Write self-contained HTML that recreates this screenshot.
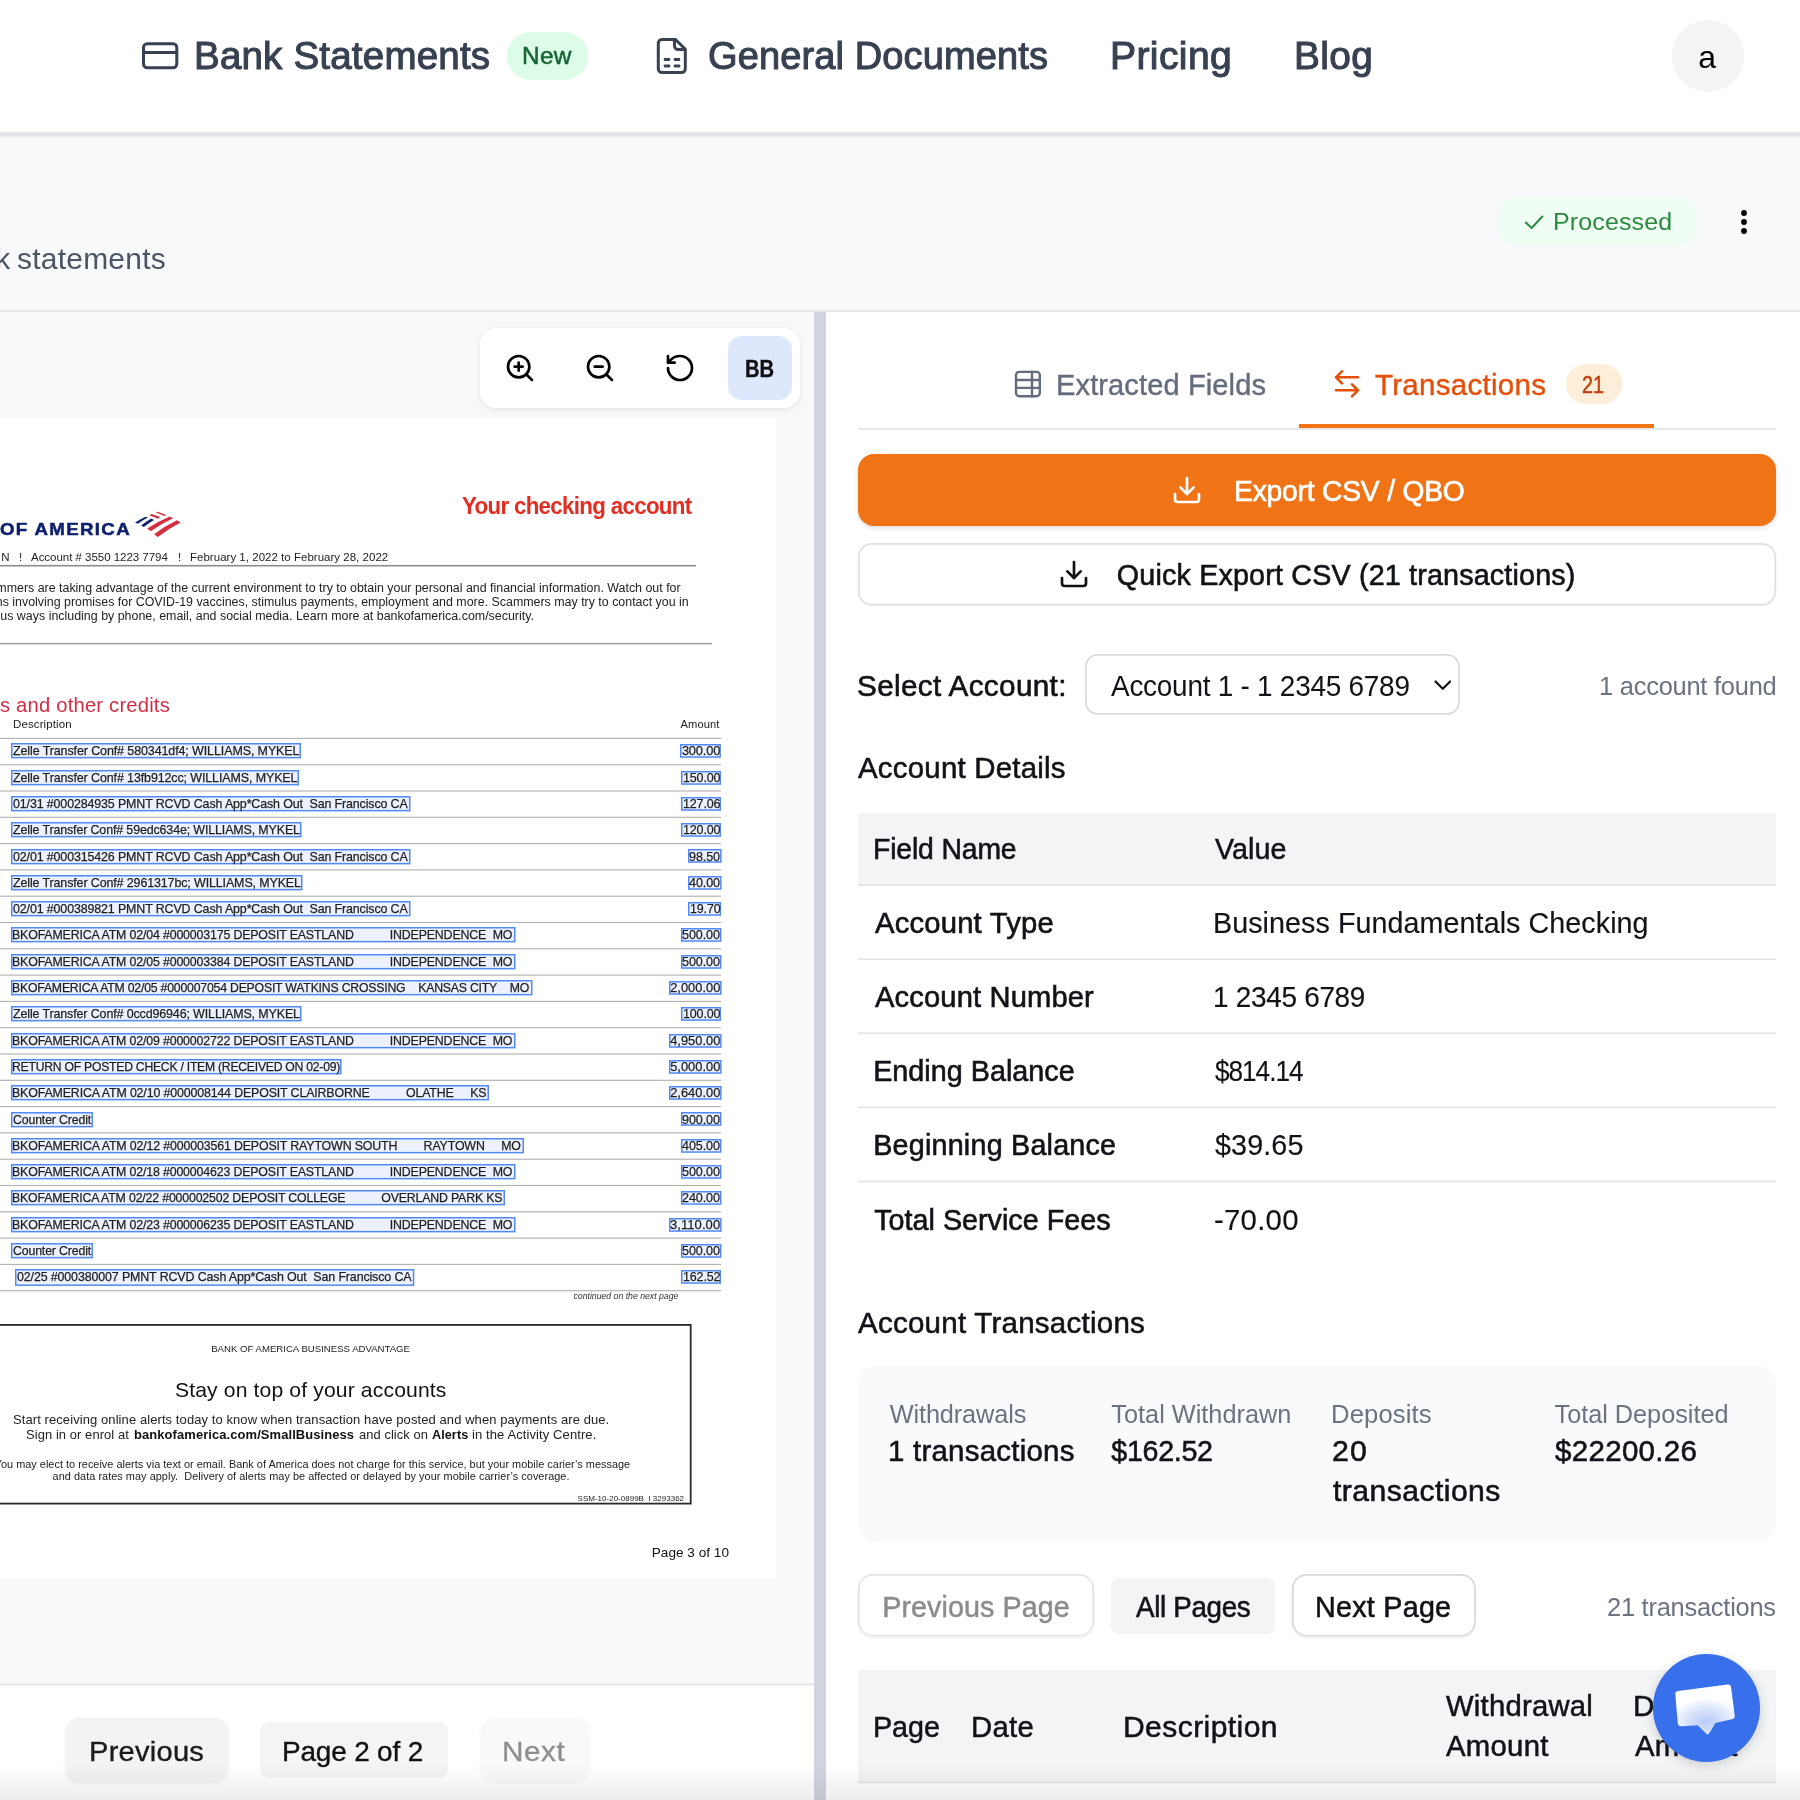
<!DOCTYPE html>
<html><head><meta charset="utf-8"><title>Bank Statement</title>
<style>
html,body{margin:0;padding:0;}
body{width:1800px;height:1800px;overflow:hidden;position:relative;background:#f8f9fb;font-family:"Liberation Sans",sans-serif;}
#app{position:absolute;left:0;top:0;width:1800px;height:1800px;overflow:hidden;will-change:transform;}
.b{position:absolute;}
.t{position:absolute;white-space:pre;line-height:1;font-family:"Liberation Sans",sans-serif;}
svg{position:absolute;overflow:visible;}
</style></head><body>
<div id="app">
<div class="b" style="left:-20px;top:0px;width:1840px;height:133.5px;background:#e3e5ea;box-shadow:0 2px 4px rgba(0,0,0,0.13);"></div>
<div class="b" style="left:0px;top:0px;width:1800px;height:132px;background:#fff;"></div>
<svg style="left:0;top:0" width="1800" height="140"><g fill="none" stroke="#374151" stroke-width="3" stroke-linecap="round" stroke-linejoin="round"><rect x="143.5" y="43.800" width="33.300" height="24" rx="3.800"/><path d="M143.500 52.600h33.300"/><path d="M675.5 39.5H662a3.7 3.7 0 0 0-3.7 3.7v25.6a3.7 3.7 0 0 0 3.7 3.7h19.6a3.7 3.7 0 0 0 3.7-3.7V49.3Z"/><path d="M674.5 39.8v6a3.7 3.7 0 0 0 3.7 3.7h6.6"/><path d="M665 59.5h4M675 59.5h4M665 66h4M675 66h4" stroke-width="2.8"/></g></svg>
<span class="t" style="left:194.26px;top:37.13px;font-size:38px;color:#374151;letter-spacing:0.187px;-webkit-text-stroke:1.05px #374151;transform:scaleX(1.0139);transform-origin:0 0;">Bank Statements</span>
<div class="b" style="left:507px;top:32px;width:81px;height:48px;background:#dcfce7;border-radius:24px;"></div>
<span class="t" style="left:521.98px;top:44.38px;font-size:24px;color:#166534;letter-spacing:0.260px;-webkit-text-stroke:0.5px #166534;transform:scaleX(1.0166);transform-origin:0 0;">New</span>
<span class="t" style="left:708.00px;top:37.13px;font-size:38px;color:#374151;letter-spacing:0.129px;-webkit-text-stroke:1.05px #374151;">General Documents</span>
<span class="t" style="left:1110.21px;top:37.13px;font-size:38px;color:#374151;letter-spacing:0.355px;-webkit-text-stroke:1.05px #374151;transform:scaleX(1.0296);transform-origin:0 0;">Pricing</span>
<span class="t" style="left:1293.63px;top:37.13px;font-size:38px;color:#374151;letter-spacing:0.337px;-webkit-text-stroke:1.05px #374151;transform:scaleX(1.0218);transform-origin:0 0;">Blog</span>
<div class="b" style="left:1672px;top:20px;width:72px;height:72px;background:#f4f4f5;border-radius:36px;"></div>
<span class="t" style="left:1698.20px;top:40.91px;font-size:32px;color:#000;">a</span>
<span class="t" style="left:-4.40px;top:244.21px;font-size:29.4px;color:#4b5563;">k</span>
<span class="t" style="left:17.00px;top:244.21px;font-size:29.4px;color:#4b5563;letter-spacing:0.216px;transform:scaleX(1.0207);transform-origin:0 0;">statements</span>
<div class="b" style="left:1498px;top:197px;width:198px;height:49px;background:#f0fdf4;border-radius:18px;"></div>
<svg style="left:0;top:0" width="1800" height="320"><path d="M1525.800 222.600l5.800 5.400 10.800-11.500" fill="none" stroke="#2a8a3e" stroke-width="2" stroke-linecap="round" stroke-linejoin="round"/><circle cx="1744" cy="213" r="2.900"/><circle cx="1744" cy="222" r="2.900"/><circle cx="1744" cy="231" r="2.900"/></svg>
<span class="t" style="left:1552.97px;top:210.38px;font-size:24.6px;color:#2a8a3e;letter-spacing:0.142px;transform:scaleX(1.0152);transform-origin:0 0;">Processed</span>
<div class="b" style="left:0px;top:310px;width:1800px;height:2px;background:#e5e7eb;"></div>
<div class="b" style="left:0px;top:312px;width:814px;height:1488px;background:#f8f9fb;"></div>
<div class="b" style="left:814px;top:312px;width:12px;height:1488px;background:#d1d4de;"></div>
<div class="b" style="left:826px;top:312px;width:974px;height:1488px;background:#fff;"></div>
<div class="b" style="left:0px;top:418px;width:776px;height:1160px;background:#fff;"></div>
<div class="b" style="left:480px;top:328px;width:320px;height:80px;background:#fff;border-radius:16px;box-shadow:0 2px 6px rgba(0,0,0,0.08),0 0 2px rgba(0,0,0,0.04);"></div>
<div class="b" style="left:728px;top:336px;width:64px;height:64px;background:#dde8fc;border-radius:14px;"></div>
<span class="t" style="left:745.16px;top:356.98px;font-size:24px;color:#111;font-weight:700;-webkit-text-stroke:0.4px #111;transform:scaleX(0.84);transform-origin:0 0;">BB</span>
<svg style="left:504.00px;top:352.00px" width="32" height="32" viewBox="0 0 24 24" fill="none" stroke="#000" stroke-width="2" stroke-linecap="round" stroke-linejoin="round"><circle cx="11" cy="11" r="8"/><path d="M21 21l-4.35-4.35M11 8v6M8 11h6"/></svg>
<svg style="left:584.00px;top:352.00px" width="32" height="32" viewBox="0 0 24 24" fill="none" stroke="#000" stroke-width="2" stroke-linecap="round" stroke-linejoin="round"><circle cx="11" cy="11" r="8"/><path d="M21 21l-4.35-4.35M8 11h6"/></svg>
<svg style="left:664.00px;top:352.00px" width="32" height="32" viewBox="0 0 24 24" fill="none" stroke="#000" stroke-width="2" stroke-linecap="round" stroke-linejoin="round"><path d="M3 12a9 9 0 1 0 9-9 9.75 9.75 0 0 0-6.74 2.74L3 8"/><path d="M3 3v5h5"/></svg>
<span class="t" style="left:-0.50px;top:521.32px;font-size:16.4px;color:#0d1f6e;letter-spacing:1.168px;font-weight:700;-webkit-text-stroke:0.5px #0d1f6e;transform:scaleX(1.14);transform-origin:0 0;">OF AMERICA</span>
<svg style="left:0;top:0" width="800" height="600"><g fill="#d42e40"><path d="M154.2 534.2Q164.5 526 176.9 520.200L180.700 522.400Q168.500 528.500 157.800 537.100z"/><path d="M147.300 528.400Q157.500 521.500 169.800 516.400L173.100 518.200Q161 523.800 150.700 531.300z"/><path d="M155.600 512.200L157.800 511.700L166.400 515L164.400 516z"/><path d="M149.300 515.300L151.600 513.900L160.200 517.100L158 518.700z"/></g><g fill="#0d1f6e"><path d="M141.100 525.600Q145.800 521.600 151.300 518.400L154 520Q148.500 523.200 143.800 526.900z"/><path d="M135.100 522.400Q140 519.200 145.600 516.700L148 517.600Q142.500 520.300 137.800 523.800z"/></g></svg>
<span class="t" style="left:462.10px;top:495.33px;font-size:23px;color:#e42c20;letter-spacing:-0.703px;font-weight:700;transform:scaleX(0.97);transform-origin:0 0;">Your checking account</span>
<span class="t" style="left:1.20px;top:552.27px;font-size:11.5px;color:#222;">N</span>
<span class="t" style="left:18.90px;top:552.27px;font-size:11.5px;color:#222;">!</span>
<span class="t" style="left:31.00px;top:552.27px;font-size:11.5px;color:#222;letter-spacing:-0.030px;">Account # 3550 1223 7794</span>
<span class="t" style="left:177.90px;top:552.27px;font-size:11.5px;color:#222;">!</span>
<span class="t" style="left:190.00px;top:552.27px;font-size:11.5px;color:#222;letter-spacing:0.018px;">February 1, 2022 to February 28, 2022</span>
<svg style="left:0px;top:563px" width="696" height="5"><rect x="0" y="1.90" width="696" height="1.6" fill="#8c8c8c"/></svg>
<span class="t" style="left:-10.58px;top:581.69px;font-size:12.42px;color:#222;">ammers are taking advantage of the current environment to try to obtain your personal and financial information. Watch out for</span>
<span class="t" style="left:-4.24px;top:595.69px;font-size:12.42px;color:#222;">ns involving promises for COVID-19 vaccines, stimulus payments, employment and more. Scammers may try to contact you in</span>
<span class="t" style="left:0.30px;top:609.89px;font-size:12.42px;color:#222;letter-spacing:0.009px;">us ways including by phone, email, and social media. Learn more at bankofamerica.com/security.</span>
<svg style="left:0px;top:641px" width="712" height="5"><rect x="0" y="1.90" width="712" height="1.5" fill="#a0a0a0"/></svg>
<span class="t" style="left:0.00px;top:696.21px;font-size:19.6px;color:#d42e45;letter-spacing:0.185px;transform:scaleX(1.032);transform-origin:0 0;">s and other credits</span>
<span class="t" style="left:12.80px;top:719.22px;font-size:11.2px;color:#222;letter-spacing:0.103px;transform:scaleX(1.0287);transform-origin:0 0;">Description</span>
<span class="t" style="left:680.60px;top:719.42px;font-size:11.2px;color:#222;letter-spacing:0.031px;">Amount</span>
<svg style="left:0px;top:736px" width="721" height="5"><rect x="0" y="1.85" width="721" height="1.1" fill="#b0b0b0"/></svg>
<svg style="left:0px;top:763px" width="721" height="5"><rect x="0" y="1.15" width="721" height="1.1" fill="#b0b0b0"/></svg>
<svg style="left:0px;top:789px" width="721" height="5"><rect x="0" y="1.45" width="721" height="1.1" fill="#b0b0b0"/></svg>
<svg style="left:0px;top:815px" width="721" height="5"><rect x="0" y="1.75" width="721" height="1.1" fill="#b0b0b0"/></svg>
<svg style="left:0px;top:842px" width="721" height="5"><rect x="0" y="1.05" width="721" height="1.1" fill="#b0b0b0"/></svg>
<svg style="left:0px;top:868px" width="721" height="5"><rect x="0" y="1.35" width="721" height="1.1" fill="#b0b0b0"/></svg>
<svg style="left:0px;top:894px" width="721" height="5"><rect x="0" y="1.65" width="721" height="1.1" fill="#b0b0b0"/></svg>
<svg style="left:0px;top:920px" width="721" height="5"><rect x="0" y="1.95" width="721" height="1.1" fill="#b0b0b0"/></svg>
<svg style="left:0px;top:947px" width="721" height="5"><rect x="0" y="1.25" width="721" height="1.1" fill="#b0b0b0"/></svg>
<svg style="left:0px;top:973px" width="721" height="5"><rect x="0" y="1.55" width="721" height="1.1" fill="#b0b0b0"/></svg>
<svg style="left:0px;top:999px" width="721" height="5"><rect x="0" y="1.85" width="721" height="1.1" fill="#b0b0b0"/></svg>
<svg style="left:0px;top:1026px" width="721" height="5"><rect x="0" y="1.15" width="721" height="1.1" fill="#b0b0b0"/></svg>
<svg style="left:0px;top:1052px" width="721" height="5"><rect x="0" y="1.45" width="721" height="1.1" fill="#b0b0b0"/></svg>
<svg style="left:0px;top:1078px" width="721" height="5"><rect x="0" y="1.75" width="721" height="1.1" fill="#b0b0b0"/></svg>
<svg style="left:0px;top:1105px" width="721" height="5"><rect x="0" y="1.05" width="721" height="1.1" fill="#b0b0b0"/></svg>
<svg style="left:0px;top:1131px" width="721" height="5"><rect x="0" y="1.35" width="721" height="1.1" fill="#b0b0b0"/></svg>
<svg style="left:0px;top:1157px" width="721" height="5"><rect x="0" y="1.65" width="721" height="1.1" fill="#b0b0b0"/></svg>
<svg style="left:0px;top:1183px" width="721" height="5"><rect x="0" y="1.95" width="721" height="1.1" fill="#b0b0b0"/></svg>
<svg style="left:0px;top:1210px" width="721" height="5"><rect x="0" y="1.25" width="721" height="1.1" fill="#b0b0b0"/></svg>
<svg style="left:0px;top:1236px" width="721" height="5"><rect x="0" y="1.55" width="721" height="1.1" fill="#b0b0b0"/></svg>
<svg style="left:0px;top:1262px" width="721" height="5"><rect x="0" y="1.85" width="721" height="1.1" fill="#b0b0b0"/></svg>
<svg style="left:0px;top:1289px" width="721" height="5"><rect x="0" y="1.15" width="721" height="1.1" fill="#b0b0b0"/></svg>
<svg style="left:9.00px;top:741.30px" width="294.00" height="19.40"><rect x="2.75" y="2.75" width="288.50" height="13.90" rx="0.00" fill="#ecf1fd" stroke="#5289f7" stroke-width="1.5"/></svg>
<span class="t" style="left:12.60px;top:745.36px;font-size:12.8px;color:#1e1e1e;letter-spacing:-0.109px;-webkit-text-stroke:0.25px #1e1e1e;transform:scaleX(0.9754);transform-origin:0 0;">Zelle Transfer Conf# 580341df4; WILLIAMS, MYKEL</span>
<svg style="left:678.20px;top:742.20px" width="44.90" height="17.80"><rect x="2.75" y="2.75" width="39.40" height="12.30" rx="0.00" fill="#ecf1fd" stroke="#5289f7" stroke-width="1.5"/></svg>
<span class="t" style="left:681.90px;top:745.36px;font-size:12.8px;color:#1e1e1e;letter-spacing:-0.145px;-webkit-text-stroke:0.25px #1e1e1e;">300.00</span>
<svg style="left:9.00px;top:767.60px" width="292.00" height="19.40"><rect x="2.75" y="2.75" width="286.50" height="13.90" rx="0.00" fill="#ecf1fd" stroke="#5289f7" stroke-width="1.5"/></svg>
<span class="t" style="left:12.60px;top:771.66px;font-size:12.8px;color:#1e1e1e;letter-spacing:-0.114px;-webkit-text-stroke:0.25px #1e1e1e;transform:scaleX(0.9741);transform-origin:0 0;">Zelle Transfer Conf# 13fb912cc; WILLIAMS, MYKEL</span>
<svg style="left:679.10px;top:768.50px" width="44.00" height="17.80"><rect x="2.75" y="2.75" width="38.50" height="12.30" rx="0.00" fill="#ecf1fd" stroke="#5289f7" stroke-width="1.5"/></svg>
<span class="t" style="left:682.80px;top:771.66px;font-size:12.8px;color:#1e1e1e;letter-spacing:-0.133px;-webkit-text-stroke:0.25px #1e1e1e;transform:scaleX(0.975);transform-origin:0 0;">150.00</span>
<svg style="left:9.00px;top:793.90px" width="403.50" height="19.40"><rect x="2.75" y="2.75" width="398.00" height="13.90" rx="0.00" fill="#ecf1fd" stroke="#5289f7" stroke-width="1.5"/></svg>
<span class="t" style="left:12.60px;top:797.96px;font-size:12.8px;color:#1e1e1e;letter-spacing:-0.134px;-webkit-text-stroke:0.25px #1e1e1e;transform:scaleX(0.9715);transform-origin:0 0;">01/31 #000284935 PMNT RCVD Cash App*Cash Out  San Francisco CA</span>
<svg style="left:679.10px;top:794.80px" width="44.00" height="17.80"><rect x="2.75" y="2.75" width="38.50" height="12.30" rx="0.00" fill="#ecf1fd" stroke="#5289f7" stroke-width="1.5"/></svg>
<span class="t" style="left:682.80px;top:797.96px;font-size:12.8px;color:#1e1e1e;letter-spacing:-0.133px;-webkit-text-stroke:0.25px #1e1e1e;transform:scaleX(0.975);transform-origin:0 0;">127.06</span>
<svg style="left:9.00px;top:820.20px" width="294.50" height="19.40"><rect x="2.75" y="2.75" width="289.00" height="13.90" rx="0.00" fill="#ecf1fd" stroke="#5289f7" stroke-width="1.5"/></svg>
<span class="t" style="left:12.60px;top:824.26px;font-size:12.8px;color:#1e1e1e;letter-spacing:-0.131px;-webkit-text-stroke:0.25px #1e1e1e;transform:scaleX(0.971);transform-origin:0 0;">Zelle Transfer Conf# 59edc634e; WILLIAMS, MYKEL</span>
<svg style="left:679.10px;top:821.10px" width="44.00" height="17.80"><rect x="2.75" y="2.75" width="38.50" height="12.30" rx="0.00" fill="#ecf1fd" stroke="#5289f7" stroke-width="1.5"/></svg>
<span class="t" style="left:682.80px;top:824.26px;font-size:12.8px;color:#1e1e1e;letter-spacing:-0.133px;-webkit-text-stroke:0.25px #1e1e1e;transform:scaleX(0.975);transform-origin:0 0;">120.00</span>
<svg style="left:9.00px;top:846.50px" width="403.50" height="19.40"><rect x="2.75" y="2.75" width="398.00" height="13.90" rx="0.00" fill="#ecf1fd" stroke="#5289f7" stroke-width="1.5"/></svg>
<span class="t" style="left:12.60px;top:850.56px;font-size:12.8px;color:#1e1e1e;letter-spacing:-0.134px;-webkit-text-stroke:0.25px #1e1e1e;transform:scaleX(0.9715);transform-origin:0 0;">02/01 #000315426 PMNT RCVD Cash App*Cash Out  San Francisco CA</span>
<svg style="left:685.50px;top:847.40px" width="37.60" height="17.80"><rect x="2.75" y="2.75" width="32.10" height="12.30" rx="0.00" fill="#ecf1fd" stroke="#5289f7" stroke-width="1.5"/></svg>
<span class="t" style="left:689.20px;top:850.56px;font-size:12.8px;color:#1e1e1e;letter-spacing:-0.093px;-webkit-text-stroke:0.25px #1e1e1e;transform:scaleX(0.983);transform-origin:0 0;">98.50</span>
<svg style="left:9.00px;top:872.80px" width="295.50" height="19.40"><rect x="2.75" y="2.75" width="290.00" height="13.90" rx="0.00" fill="#ecf1fd" stroke="#5289f7" stroke-width="1.5"/></svg>
<span class="t" style="left:12.60px;top:876.86px;font-size:12.8px;color:#1e1e1e;letter-spacing:-0.122px;-webkit-text-stroke:0.25px #1e1e1e;transform:scaleX(0.973);transform-origin:0 0;">Zelle Transfer Conf# 2961317bc; WILLIAMS, MYKEL</span>
<svg style="left:685.50px;top:873.70px" width="37.60" height="17.80"><rect x="2.75" y="2.75" width="32.10" height="12.30" rx="0.00" fill="#ecf1fd" stroke="#5289f7" stroke-width="1.5"/></svg>
<span class="t" style="left:689.20px;top:876.86px;font-size:12.8px;color:#1e1e1e;letter-spacing:-0.093px;-webkit-text-stroke:0.25px #1e1e1e;transform:scaleX(0.983);transform-origin:0 0;">40.00</span>
<svg style="left:9.00px;top:899.10px" width="403.50" height="19.40"><rect x="2.75" y="2.75" width="398.00" height="13.90" rx="0.00" fill="#ecf1fd" stroke="#5289f7" stroke-width="1.5"/></svg>
<span class="t" style="left:12.60px;top:903.16px;font-size:12.8px;color:#1e1e1e;letter-spacing:-0.134px;-webkit-text-stroke:0.25px #1e1e1e;transform:scaleX(0.9715);transform-origin:0 0;">02/01 #000389821 PMNT RCVD Cash App*Cash Out  San Francisco CA</span>
<svg style="left:686.00px;top:900.00px" width="37.10" height="17.80"><rect x="2.75" y="2.75" width="31.60" height="12.30" rx="0.00" fill="#ecf1fd" stroke="#5289f7" stroke-width="1.5"/></svg>
<span class="t" style="left:689.70px;top:903.16px;font-size:12.8px;color:#1e1e1e;letter-spacing:-0.145px;-webkit-text-stroke:0.25px #1e1e1e;transform:scaleX(0.9736);transform-origin:0 0;">19.70</span>
<svg style="left:9.00px;top:925.40px" width="508.50" height="19.40"><rect x="2.75" y="2.75" width="503.00" height="13.90" rx="0.00" fill="#ecf1fd" stroke="#5289f7" stroke-width="1.5"/></svg>
<span class="t" style="left:11.63px;top:929.46px;font-size:12.8px;color:#1e1e1e;letter-spacing:-0.164px;-webkit-text-stroke:0.25px #1e1e1e;transform:scaleX(0.9665);transform-origin:0 0;">BKOFAMERICA ATM 02/04 #000003175 DEPOSIT EASTLAND           INDEPENDENCE  MO</span>
<svg style="left:678.70px;top:926.30px" width="44.40" height="17.80"><rect x="2.75" y="2.75" width="38.90" height="12.30" rx="0.00" fill="#ecf1fd" stroke="#5289f7" stroke-width="1.5"/></svg>
<span class="t" style="left:682.40px;top:929.46px;font-size:12.8px;color:#1e1e1e;letter-spacing:-0.100px;-webkit-text-stroke:0.25px #1e1e1e;transform:scaleX(0.9812);transform-origin:0 0;">500.00</span>
<svg style="left:9.00px;top:951.70px" width="508.50" height="19.40"><rect x="2.75" y="2.75" width="503.00" height="13.90" rx="0.00" fill="#ecf1fd" stroke="#5289f7" stroke-width="1.5"/></svg>
<span class="t" style="left:11.63px;top:955.76px;font-size:12.8px;color:#1e1e1e;letter-spacing:-0.164px;-webkit-text-stroke:0.25px #1e1e1e;transform:scaleX(0.9665);transform-origin:0 0;">BKOFAMERICA ATM 02/05 #000003384 DEPOSIT EASTLAND           INDEPENDENCE  MO</span>
<svg style="left:678.70px;top:952.60px" width="44.40" height="17.80"><rect x="2.75" y="2.75" width="38.90" height="12.30" rx="0.00" fill="#ecf1fd" stroke="#5289f7" stroke-width="1.5"/></svg>
<span class="t" style="left:682.40px;top:955.76px;font-size:12.8px;color:#1e1e1e;letter-spacing:-0.100px;-webkit-text-stroke:0.25px #1e1e1e;transform:scaleX(0.9812);transform-origin:0 0;">500.00</span>
<svg style="left:9.00px;top:978.00px" width="525.50" height="19.40"><rect x="2.75" y="2.75" width="520.00" height="13.90" rx="0.00" fill="#ecf1fd" stroke="#5289f7" stroke-width="1.5"/></svg>
<span class="t" style="left:11.64px;top:982.06px;font-size:12.8px;color:#1e1e1e;letter-spacing:-0.211px;-webkit-text-stroke:0.25px #1e1e1e;transform:scaleX(0.958);transform-origin:0 0;">BKOFAMERICA ATM 02/05 #000007054 DEPOSIT WATKINS CROSSING    KANSAS CITY    MO</span>
<svg style="left:666.50px;top:978.90px" width="56.60" height="17.80"><rect x="2.75" y="2.75" width="51.10" height="12.30" rx="0.00" fill="#ecf1fd" stroke="#5289f7" stroke-width="1.5"/></svg>
<span class="t" style="left:670.20px;top:982.06px;font-size:12.8px;color:#1e1e1e;letter-spacing:0.043px;-webkit-text-stroke:0.25px #1e1e1e;">2,000.00</span>
<svg style="left:9.00px;top:1004.30px" width="294.50" height="19.40"><rect x="2.75" y="2.75" width="289.00" height="13.90" rx="0.00" fill="#ecf1fd" stroke="#5289f7" stroke-width="1.5"/></svg>
<span class="t" style="left:12.60px;top:1008.36px;font-size:12.8px;color:#1e1e1e;letter-spacing:-0.124px;-webkit-text-stroke:0.25px #1e1e1e;transform:scaleX(0.9723);transform-origin:0 0;">Zelle Transfer Conf# 0ccd96946; WILLIAMS, MYKEL</span>
<svg style="left:679.10px;top:1005.20px" width="44.00" height="17.80"><rect x="2.75" y="2.75" width="38.50" height="12.30" rx="0.00" fill="#ecf1fd" stroke="#5289f7" stroke-width="1.5"/></svg>
<span class="t" style="left:682.80px;top:1008.36px;font-size:12.8px;color:#1e1e1e;letter-spacing:-0.133px;-webkit-text-stroke:0.25px #1e1e1e;transform:scaleX(0.975);transform-origin:0 0;">100.00</span>
<svg style="left:9.00px;top:1030.60px" width="508.50" height="19.40"><rect x="2.75" y="2.75" width="503.00" height="13.90" rx="0.00" fill="#ecf1fd" stroke="#5289f7" stroke-width="1.5"/></svg>
<span class="t" style="left:11.63px;top:1034.66px;font-size:12.8px;color:#1e1e1e;letter-spacing:-0.164px;-webkit-text-stroke:0.25px #1e1e1e;transform:scaleX(0.9665);transform-origin:0 0;">BKOFAMERICA ATM 02/09 #000002722 DEPOSIT EASTLAND           INDEPENDENCE  MO</span>
<svg style="left:666.50px;top:1031.50px" width="56.60" height="17.80"><rect x="2.75" y="2.75" width="51.10" height="12.30" rx="0.00" fill="#ecf1fd" stroke="#5289f7" stroke-width="1.5"/></svg>
<span class="t" style="left:670.20px;top:1034.66px;font-size:12.8px;color:#1e1e1e;letter-spacing:0.043px;-webkit-text-stroke:0.25px #1e1e1e;">4,950.00</span>
<svg style="left:9.00px;top:1056.90px" width="334.50" height="19.40"><rect x="2.75" y="2.75" width="329.00" height="13.90" rx="0.00" fill="#ecf1fd" stroke="#5289f7" stroke-width="1.5"/></svg>
<span class="t" style="left:11.65px;top:1060.96px;font-size:12.8px;color:#1e1e1e;letter-spacing:-0.250px;-webkit-text-stroke:0.25px #1e1e1e;transform:scaleX(0.9518);transform-origin:0 0;">RETURN OF POSTED CHECK / ITEM (RECEIVED ON 02-09)</span>
<svg style="left:666.50px;top:1057.80px" width="56.60" height="17.80"><rect x="2.75" y="2.75" width="51.10" height="12.30" rx="0.00" fill="#ecf1fd" stroke="#5289f7" stroke-width="1.5"/></svg>
<span class="t" style="left:670.20px;top:1060.96px;font-size:12.8px;color:#1e1e1e;letter-spacing:0.043px;-webkit-text-stroke:0.25px #1e1e1e;">5,000.00</span>
<svg style="left:9.00px;top:1083.20px" width="482.00" height="19.40"><rect x="2.75" y="2.75" width="476.50" height="13.90" rx="0.00" fill="#ecf1fd" stroke="#5289f7" stroke-width="1.5"/></svg>
<span class="t" style="left:11.63px;top:1087.26px;font-size:12.8px;color:#1e1e1e;letter-spacing:-0.150px;-webkit-text-stroke:0.25px #1e1e1e;transform:scaleX(0.9678);transform-origin:0 0;">BKOFAMERICA ATM 02/10 #000008144 DEPOSIT CLAIRBORNE           OLATHE     KS</span>
<svg style="left:666.50px;top:1084.10px" width="56.60" height="17.80"><rect x="2.75" y="2.75" width="51.10" height="12.30" rx="0.00" fill="#ecf1fd" stroke="#5289f7" stroke-width="1.5"/></svg>
<span class="t" style="left:670.20px;top:1087.26px;font-size:12.8px;color:#1e1e1e;letter-spacing:0.043px;-webkit-text-stroke:0.25px #1e1e1e;">2,640.00</span>
<svg style="left:9.00px;top:1109.50px" width="86.00" height="19.40"><rect x="2.75" y="2.75" width="80.50" height="13.90" rx="0.00" fill="#ecf1fd" stroke="#5289f7" stroke-width="1.5"/></svg>
<span class="t" style="left:12.60px;top:1113.56px;font-size:12.8px;color:#1e1e1e;letter-spacing:-0.162px;-webkit-text-stroke:0.25px #1e1e1e;transform:scaleX(0.9637);transform-origin:0 0;">Counter Credit</span>
<svg style="left:678.70px;top:1110.40px" width="44.40" height="17.80"><rect x="2.75" y="2.75" width="38.90" height="12.30" rx="0.00" fill="#ecf1fd" stroke="#5289f7" stroke-width="1.5"/></svg>
<span class="t" style="left:682.40px;top:1113.56px;font-size:12.8px;color:#1e1e1e;letter-spacing:-0.100px;-webkit-text-stroke:0.25px #1e1e1e;transform:scaleX(0.9812);transform-origin:0 0;">900.00</span>
<svg style="left:9.00px;top:1135.80px" width="517.00" height="19.40"><rect x="2.75" y="2.75" width="511.50" height="13.90" rx="0.00" fill="#ecf1fd" stroke="#5289f7" stroke-width="1.5"/></svg>
<span class="t" style="left:11.63px;top:1139.86px;font-size:12.8px;color:#1e1e1e;letter-spacing:-0.158px;-webkit-text-stroke:0.25px #1e1e1e;transform:scaleX(0.968);transform-origin:0 0;">BKOFAMERICA ATM 02/12 #000003561 DEPOSIT RAYTOWN SOUTH        RAYTOWN     MO</span>
<svg style="left:678.70px;top:1136.70px" width="44.40" height="17.80"><rect x="2.75" y="2.75" width="38.90" height="12.30" rx="0.00" fill="#ecf1fd" stroke="#5289f7" stroke-width="1.5"/></svg>
<span class="t" style="left:682.40px;top:1139.86px;font-size:12.8px;color:#1e1e1e;letter-spacing:-0.100px;-webkit-text-stroke:0.25px #1e1e1e;transform:scaleX(0.9812);transform-origin:0 0;">405.00</span>
<svg style="left:9.00px;top:1162.10px" width="508.50" height="19.40"><rect x="2.75" y="2.75" width="503.00" height="13.90" rx="0.00" fill="#ecf1fd" stroke="#5289f7" stroke-width="1.5"/></svg>
<span class="t" style="left:11.63px;top:1166.16px;font-size:12.8px;color:#1e1e1e;letter-spacing:-0.164px;-webkit-text-stroke:0.25px #1e1e1e;transform:scaleX(0.9665);transform-origin:0 0;">BKOFAMERICA ATM 02/18 #000004623 DEPOSIT EASTLAND           INDEPENDENCE  MO</span>
<svg style="left:678.70px;top:1163.00px" width="44.40" height="17.80"><rect x="2.75" y="2.75" width="38.90" height="12.30" rx="0.00" fill="#ecf1fd" stroke="#5289f7" stroke-width="1.5"/></svg>
<span class="t" style="left:682.40px;top:1166.16px;font-size:12.8px;color:#1e1e1e;letter-spacing:-0.100px;-webkit-text-stroke:0.25px #1e1e1e;transform:scaleX(0.9812);transform-origin:0 0;">500.00</span>
<svg style="left:9.00px;top:1188.40px" width="498.00" height="19.40"><rect x="2.75" y="2.75" width="492.50" height="13.90" rx="0.00" fill="#ecf1fd" stroke="#5289f7" stroke-width="1.5"/></svg>
<span class="t" style="left:11.64px;top:1192.46px;font-size:12.8px;color:#1e1e1e;letter-spacing:-0.177px;-webkit-text-stroke:0.25px #1e1e1e;transform:scaleX(0.9637);transform-origin:0 0;">BKOFAMERICA ATM 02/22 #000002502 DEPOSIT COLLEGE           OVERLAND PARK KS</span>
<svg style="left:678.70px;top:1189.30px" width="44.40" height="17.80"><rect x="2.75" y="2.75" width="38.90" height="12.30" rx="0.00" fill="#ecf1fd" stroke="#5289f7" stroke-width="1.5"/></svg>
<span class="t" style="left:682.40px;top:1192.46px;font-size:12.8px;color:#1e1e1e;letter-spacing:-0.100px;-webkit-text-stroke:0.25px #1e1e1e;transform:scaleX(0.9812);transform-origin:0 0;">240.00</span>
<svg style="left:9.00px;top:1214.70px" width="508.50" height="19.40"><rect x="2.75" y="2.75" width="503.00" height="13.90" rx="0.00" fill="#ecf1fd" stroke="#5289f7" stroke-width="1.5"/></svg>
<span class="t" style="left:11.63px;top:1218.76px;font-size:12.8px;color:#1e1e1e;letter-spacing:-0.164px;-webkit-text-stroke:0.25px #1e1e1e;transform:scaleX(0.9665);transform-origin:0 0;">BKOFAMERICA ATM 02/23 #000006235 DEPOSIT EASTLAND           INDEPENDENCE  MO</span>
<svg style="left:666.50px;top:1215.60px" width="56.60" height="17.80"><rect x="2.75" y="2.75" width="51.10" height="12.30" rx="0.00" fill="#ecf1fd" stroke="#5289f7" stroke-width="1.5"/></svg>
<span class="t" style="left:670.20px;top:1218.76px;font-size:12.8px;color:#1e1e1e;letter-spacing:0.071px;-webkit-text-stroke:0.25px #1e1e1e;transform:scaleX(1.0154);transform-origin:0 0;">3,110.00</span>
<svg style="left:9.00px;top:1241.00px" width="86.00" height="19.40"><rect x="2.75" y="2.75" width="80.50" height="13.90" rx="0.00" fill="#ecf1fd" stroke="#5289f7" stroke-width="1.5"/></svg>
<span class="t" style="left:12.60px;top:1245.06px;font-size:12.8px;color:#1e1e1e;letter-spacing:-0.162px;-webkit-text-stroke:0.25px #1e1e1e;transform:scaleX(0.9637);transform-origin:0 0;">Counter Credit</span>
<svg style="left:678.70px;top:1241.90px" width="44.40" height="17.80"><rect x="2.75" y="2.75" width="38.90" height="12.30" rx="0.00" fill="#ecf1fd" stroke="#5289f7" stroke-width="1.5"/></svg>
<span class="t" style="left:682.40px;top:1245.06px;font-size:12.8px;color:#1e1e1e;letter-spacing:-0.100px;-webkit-text-stroke:0.25px #1e1e1e;transform:scaleX(0.9812);transform-origin:0 0;">500.00</span>
<svg style="left:13.20px;top:1267.30px" width="403.30" height="20.90"><rect x="2.75" y="2.75" width="397.80" height="15.40" rx="0.00" fill="#ecf1fd" stroke="#5289f7" stroke-width="1.5"/></svg>
<span class="t" style="left:16.80px;top:1271.36px;font-size:12.8px;color:#1e1e1e;letter-spacing:-0.135px;-webkit-text-stroke:0.25px #1e1e1e;transform:scaleX(0.9712);transform-origin:0 0;">02/25 #000380007 PMNT RCVD Cash App*Cash Out  San Francisco CA</span>
<svg style="left:679.10px;top:1268.20px" width="44.00" height="17.80"><rect x="2.75" y="2.75" width="38.50" height="12.30" rx="0.00" fill="#ecf1fd" stroke="#5289f7" stroke-width="1.5"/></svg>
<span class="t" style="left:682.80px;top:1271.36px;font-size:12.8px;color:#1e1e1e;letter-spacing:-0.133px;-webkit-text-stroke:0.25px #1e1e1e;transform:scaleX(0.975);transform-origin:0 0;">162.52</span>
<span class="t" style="left:573.50px;top:1291.85px;font-size:8.8px;color:#333;letter-spacing:-0.050px;font-style:italic;">continued on the next page</span>
<svg style="left:-5.00px;top:1322.00px" width="698.60" height="184.50"><rect x="2.90" y="2.90" width="692.80" height="178.70" rx="0.00" fill="none" stroke="#2a2a2a" stroke-width="1.8"/></svg>
<span class="t" style="left:211.20px;top:1344.47px;font-size:9.6px;color:#222;letter-spacing:0.009px;">BANK OF AMERICA BUSINESS ADVANTAGE</span>
<span class="t" style="left:175.20px;top:1380.18px;font-size:20.7px;color:#111;letter-spacing:0.132px;transform:scaleX(1.021);transform-origin:0 0;">Stay on top of your accounts</span>
<span class="t" style="left:12.85px;top:1413.75px;font-size:12.7px;color:#222;letter-spacing:0.088px;transform:scaleX(1.0231);transform-origin:0 0;">Start receiving online alerts today to know when transaction have posted and when payments are due.</span>
<span class="t" style="left:26.30px;top:1429.45px;font-size:12.7px;color:#222;letter-spacing:0.074px;transform:scaleX(1.0203);transform-origin:0 0;">Sign in or enrol at</span>
<span class="t" style="left:133.90px;top:1429.45px;font-size:12.7px;color:#111;letter-spacing:0.093px;font-weight:700;transform:scaleX(1.02);transform-origin:0 0;">bankofamerica.com/SmallBusiness</span>
<span class="t" style="left:358.50px;top:1429.45px;font-size:12.7px;color:#222;letter-spacing:0.067px;transform:scaleX(1.0166);transform-origin:0 0;">and click on</span>
<span class="t" style="left:431.90px;top:1429.45px;font-size:12.7px;color:#111;letter-spacing:0.079px;font-weight:700;">Alerts</span>
<span class="t" style="left:472.10px;top:1429.45px;font-size:12.7px;color:#222;letter-spacing:0.091px;transform:scaleX(1.0259);transform-origin:0 0;">in the Activity Centre.</span>
<span class="t" style="left:-5.30px;top:1459.07px;font-size:10.9px;color:#222;letter-spacing:0.019px;">You may elect to receive alerts via text or email. Bank of America does not charge for this service, but your mobile carier’s message</span>
<span class="t" style="left:52.60px;top:1471.47px;font-size:10.9px;color:#222;letter-spacing:0.041px;">and data rates may apply.  Delivery of alerts may be affected or delayed by your mobile carrier’s coverage.</span>
<span class="t" style="left:577.60px;top:1495.23px;font-size:8px;color:#222;letter-spacing:0.006px;">SSM-10-20-0899B  I 3293362</span>
<span class="t" style="left:651.80px;top:1545.89px;font-size:13.6px;color:#111;letter-spacing:0.006px;">Page 3 of 10</span>
<div class="b" style="left:0px;top:1684px;width:814px;height:116px;background:#fff;"></div>
<svg style="left:0px;top:1682px" width="814" height="5"><rect x="0" y="1.60" width="814" height="1.7" fill="#e1e3e8"/></svg>
<div class="b" style="left:66px;top:1718.3px;width:162.3px;height:63.4px;background:#f3f3f4;border-radius:14px;box-shadow:0 1px 4px rgba(0,0,0,0.09);"></div>
<span class="t" style="left:88.66px;top:1736.57px;font-size:28.5px;color:#1a1a1a;letter-spacing:0.222px;-webkit-text-stroke:0.35px #1a1a1a;transform:scaleX(1.0219);transform-origin:0 0;">Previous</span>
<div class="b" style="left:260px;top:1722.3px;width:187.7px;height:55.4px;background:#f3f4f6;border-radius:9px;"></div>
<span class="t" style="left:282.34px;top:1736.57px;font-size:28.5px;color:#111;letter-spacing:-0.185px;-webkit-text-stroke:0.35px #111;transform:scaleX(0.981);transform-origin:0 0;">Page 2 of 2</span>
<div class="b" style="left:480.7px;top:1718.3px;width:108.6px;height:63.4px;background:#f9f9fa;border-radius:14px;box-shadow:0 1px 4px rgba(0,0,0,0.05);"></div>
<span class="t" style="left:502.22px;top:1736.57px;font-size:28.5px;color:#8e8e8e;letter-spacing:0.514px;-webkit-text-stroke:0.35px #8e8e8e;transform:scaleX(1.0425);transform-origin:0 0;">Next</span>
<svg style="left:0;top:0" width="1800" height="440"><g fill="none" stroke="#656c7e" stroke-width="2.4" stroke-linecap="round" stroke-linejoin="round"><rect x="1016" y="371.9" width="23.8" height="24.3" rx="3.2"/><path d="M1016 380h23.800M1016 387.900h23.800M1032 371.900v24.300"/></g><g fill="none" stroke="#e4500a" stroke-width="2.6" stroke-linecap="round" stroke-linejoin="round"><path d="M1358 377.300H1336M1342 371.300l-6 6 6 6M1336 390.300h22M1352 384.300l6 6-6 6"/></g></svg>
<span class="t" style="left:1056.07px;top:370.51px;font-size:28.7px;color:#656c7e;letter-spacing:0.112px;-webkit-text-stroke:0.4px #656c7e;transform:scaleX(1.0126);transform-origin:0 0;">Extracted Fields</span>
<span class="t" style="left:1374.70px;top:370.51px;font-size:28.7px;color:#e4500a;letter-spacing:0.275px;-webkit-text-stroke:0.4px #e4500a;transform:scaleX(1.0287);transform-origin:0 0;">Transactions</span>
<div class="b" style="left:1566px;top:364px;width:56px;height:40px;background:#fdeed9;border-radius:20px;"></div>
<span class="t" style="left:1581.90px;top:372.91px;font-size:24.8px;color:#c2410c;letter-spacing:-0.041px;-webkit-text-stroke:0.5px #c2410c;transform:scaleX(0.8);transform-origin:0 0;">21</span>
<svg style="left:858px;top:427px" width="918" height="5"><rect x="0" y="1.10" width="918" height="1.7" fill="#e2e4e8"/></svg>
<div class="b" style="left:1298.7px;top:424px;width:355.5px;height:4px;background:#f07316;"></div>
<div class="b" style="left:858px;top:454.3px;width:918px;height:71.3px;background:#f07316;border-radius:16px;box-shadow:0 2px 5px rgba(0,0,0,0.13);"></div>
<svg style="left:1171px;top:474px" width="32" height="32" viewBox="0 0 24 24" fill="none" stroke="#fff" stroke-width="2" stroke-linecap="round" stroke-linejoin="round"><path d="M21 15v4a2 2 0 0 1-2 2H5a2 2 0 0 1-2-2v-4"/><path d="M7 10l5 5 5-5"/><path d="M12 15V3"/></svg>
<span class="t" style="left:1234.03px;top:477.01px;font-size:28.7px;color:#fff;letter-spacing:-0.183px;-webkit-text-stroke:0.7px #fff;transform:scaleX(0.9828);transform-origin:0 0;">Export CSV / QBO</span>
<div class="b" style="left:858px;top:542.6px;width:918px;height:62.5px;border-radius:14px;box-shadow:0 1px 3px rgba(0,0,0,0.06);"></div>
<svg style="left:856.00px;top:540.60px" width="922.00" height="66.50"><rect x="2.85" y="2.85" width="916.30" height="60.80" rx="13.15" fill="#fff" stroke="#dfe1e6" stroke-width="1.7"/></svg>
<svg style="left:1058.2px;top:557.6px" width="32" height="32" viewBox="0 0 24 24" fill="none" stroke="#111" stroke-width="2" stroke-linecap="round" stroke-linejoin="round"><path d="M21 15v4a2 2 0 0 1-2 2H5a2 2 0 0 1-2-2v-4"/><path d="M7 10l5 5 5-5"/><path d="M12 15V3"/></svg>
<span class="t" style="left:1116.80px;top:560.71px;font-size:28.7px;color:#111318;letter-spacing:0.175px;-webkit-text-stroke:0.6px #111318;">Quick Export CSV (21 transactions)</span>
<span class="t" style="left:857.06px;top:671.71px;font-size:28.7px;color:#111318;letter-spacing:0.321px;-webkit-text-stroke:0.6px #111318;transform:scaleX(1.0356);transform-origin:0 0;">Select Account:</span>
<svg style="left:1082.60px;top:652.40px" width="378.80" height="64.80"><rect x="2.90" y="2.90" width="373.00" height="59.00" rx="11.60" fill="#fff" stroke="#dbdbde" stroke-width="1.8"/></svg>
<span class="t" style="left:1110.70px;top:671.71px;font-size:28.7px;color:#111318;letter-spacing:-0.255px;transform:scaleX(0.9737);transform-origin:0 0;">Account 1 - 1 2345 6789</span>
<svg style="left:0;top:0" width="1800" height="720"><path d="M1435.500 681.500l7.300 7.300 7.300-7.300" fill="none" stroke="#111" stroke-width="2.2" stroke-linecap="round" stroke-linejoin="round"/></svg>
<span class="t" style="left:1599.06px;top:673.02px;font-size:26.2px;color:#6b7280;letter-spacing:-0.250px;transform:scaleX(0.9721);transform-origin:0 0;">1 account found</span>
<span class="t" style="left:858.10px;top:754.41px;font-size:28.7px;color:#111318;letter-spacing:0.230px;-webkit-text-stroke:0.55px #111318;transform:scaleX(1.0248);transform-origin:0 0;">Account Details</span>
<div class="b" style="left:858px;top:812.6px;width:918px;height:72.4px;background:#f3f4f6;"></div>
<svg style="left:858px;top:883px" width="918" height="5"><rect x="0" y="1.20" width="918" height="1.7" fill="#e2e4e8"/></svg>
<svg style="left:858px;top:957px" width="918" height="5"><rect x="0" y="1.30" width="918" height="1.7" fill="#e2e4e8"/></svg>
<svg style="left:858px;top:1031px" width="918" height="5"><rect x="0" y="1.40" width="918" height="1.7" fill="#e2e4e8"/></svg>
<svg style="left:858px;top:1105px" width="918" height="5"><rect x="0" y="1.50" width="918" height="1.7" fill="#e2e4e8"/></svg>
<svg style="left:858px;top:1179px" width="918" height="5"><rect x="0" y="1.60" width="918" height="1.7" fill="#e2e4e8"/></svg>
<span class="t" style="left:873.23px;top:834.51px;font-size:28.7px;color:#111318;letter-spacing:-0.136px;-webkit-text-stroke:0.6px #111318;transform:scaleX(0.9874);transform-origin:0 0;">Field Name</span>
<span class="t" style="left:1215.00px;top:834.51px;font-size:28.7px;color:#111318;letter-spacing:0.053px;-webkit-text-stroke:0.5px #111318;">Value</span>
<span class="t" style="left:874.70px;top:909.11px;font-size:28.7px;color:#111318;letter-spacing:0.191px;-webkit-text-stroke:0.6px #111318;transform:scaleX(1.0185);transform-origin:0 0;">Account Type</span>
<span class="t" style="left:1213.00px;top:909.11px;font-size:28.7px;color:#111318;letter-spacing:0.063px;-webkit-text-stroke:0.15px #111318;">Business Fundamentals Checking</span>
<span class="t" style="left:874.70px;top:983.21px;font-size:28.7px;color:#111318;letter-spacing:0.154px;-webkit-text-stroke:0.6px #111318;transform:scaleX(1.0143);transform-origin:0 0;">Account Number</span>
<span class="t" style="left:1213.05px;top:983.21px;font-size:28.7px;color:#111318;letter-spacing:-0.291px;-webkit-text-stroke:0.15px #111318;transform:scaleX(0.9729);transform-origin:0 0;">1 2345 6789</span>
<span class="t" style="left:873.20px;top:1057.31px;font-size:28.7px;color:#111318;letter-spacing:0.038px;-webkit-text-stroke:0.6px #111318;">Ending Balance</span>
<span class="t" style="left:1215.00px;top:1057.31px;font-size:28.7px;color:#111318;letter-spacing:-1.114px;-webkit-text-stroke:0.15px #111318;transform:scaleX(0.9118);transform-origin:0 0;">$814.14</span>
<span class="t" style="left:873.20px;top:1131.41px;font-size:28.7px;color:#111318;letter-spacing:0.225px;-webkit-text-stroke:0.6px #111318;">Beginning Balance</span>
<span class="t" style="left:1215.00px;top:1131.41px;font-size:28.7px;color:#111318;letter-spacing:0.122px;-webkit-text-stroke:0.15px #111318;">$39.65</span>
<span class="t" style="left:874.20px;top:1205.51px;font-size:28.7px;color:#111318;letter-spacing:0.022px;-webkit-text-stroke:0.6px #111318;">Total Service Fees</span>
<span class="t" style="left:1213.98px;top:1205.51px;font-size:28.7px;color:#111318;letter-spacing:0.244px;-webkit-text-stroke:0.15px #111318;transform:scaleX(1.0235);transform-origin:0 0;">-70.00</span>
<span class="t" style="left:858.10px;top:1309.11px;font-size:28.7px;color:#111318;letter-spacing:0.257px;-webkit-text-stroke:0.55px #111318;transform:scaleX(1.0275);transform-origin:0 0;">Account Transactions</span>
<div class="b" style="left:858px;top:1366.4px;width:917.8px;height:175.2px;background:#f9fafb;border-radius:18px;"></div>
<span class="t" style="left:889.70px;top:1401.88px;font-size:25.3px;color:#6b7280;letter-spacing:-0.111px;">Withdrawals</span>
<span class="t" style="left:887.65px;top:1436.61px;font-size:28.7px;color:#111318;letter-spacing:0.232px;-webkit-text-stroke:0.55px #111318;transform:scaleX(1.0264);transform-origin:0 0;">1 transactions</span>
<span class="t" style="left:1111.30px;top:1401.88px;font-size:25.3px;color:#6b7280;letter-spacing:0.008px;">Total Withdrawn</span>
<span class="t" style="left:1111.30px;top:1436.61px;font-size:28.7px;color:#111318;letter-spacing:-0.341px;-webkit-text-stroke:0.55px #111318;">$162.52</span>
<span class="t" style="left:1330.87px;top:1401.88px;font-size:25.3px;color:#6b7280;letter-spacing:0.125px;transform:scaleX(1.014);transform-origin:0 0;">Deposits</span>
<span class="t" style="left:1331.85px;top:1436.61px;font-size:28.7px;color:#111318;letter-spacing:1.041px;-webkit-text-stroke:0.55px #111318;transform:scaleX(1.055);transform-origin:0 0;">20</span>
<span class="t" style="left:1554.50px;top:1401.88px;font-size:25.3px;color:#6b7280;letter-spacing:-0.022px;">Total Deposited</span>
<span class="t" style="left:1554.50px;top:1436.61px;font-size:28.7px;color:#111318;letter-spacing:0.308px;-webkit-text-stroke:0.55px #111318;transform:scaleX(1.0283);transform-origin:0 0;">$22200.26</span>
<span class="t" style="left:1333.30px;top:1476.51px;font-size:28.7px;color:#111318;letter-spacing:0.439px;-webkit-text-stroke:0.55px #111318;transform:scaleX(1.0493);transform-origin:0 0;">transactions</span>
<div class="b" style="left:858.4px;top:1574.4px;width:236px;height:62.6px;border-radius:14.5px;box-shadow:0 1px 3px rgba(0,0,0,0.07);"></div>
<svg style="left:856.40px;top:1572.40px" width="240.00" height="66.60"><rect x="2.85" y="2.85" width="234.30" height="60.90" rx="13.65" fill="#fff" stroke="#e4e4e6" stroke-width="1.7"/></svg>
<span class="t" style="left:882.20px;top:1592.51px;font-size:28.7px;color:#8b8b8d;letter-spacing:0.081px;-webkit-text-stroke:0.45px #8b8b8d;">Previous Page</span>
<div class="b" style="left:1111.3px;top:1578.2px;width:164px;height:55.5px;background:#f3f4f6;border-radius:8px;"></div>
<span class="t" style="left:1135.80px;top:1592.51px;font-size:28.7px;color:#111318;letter-spacing:-0.339px;-webkit-text-stroke:0.55px #111318;transform:scaleX(0.9675);transform-origin:0 0;">All Pages</span>
<div class="b" style="left:1291.5px;top:1574.4px;width:183.8px;height:62.6px;border-radius:14.5px;box-shadow:0 1px 3px rgba(0,0,0,0.08);"></div>
<svg style="left:1289.50px;top:1572.40px" width="187.80" height="66.60"><rect x="2.85" y="2.85" width="182.10" height="60.90" rx="13.65" fill="#fff" stroke="#d9d9dc" stroke-width="1.7"/></svg>
<span class="t" style="left:1315.10px;top:1592.51px;font-size:28.7px;color:#111318;letter-spacing:0.250px;-webkit-text-stroke:0.55px #111318;">Next Page</span>
<span class="t" style="left:1606.53px;top:1593.82px;font-size:26.2px;color:#6b7280;letter-spacing:-0.250px;transform:scaleX(0.9711);transform-origin:0 0;">21 transactions</span>
<div class="b" style="left:858px;top:1670.2px;width:918px;height:112.7px;background:#f3f4f6;"></div>
<svg style="left:858px;top:1780px" width="918" height="5"><rect x="0" y="1.60" width="918" height="1.7" fill="#e0e2e6"/></svg>
<span class="t" style="left:873.00px;top:1712.71px;font-size:28.7px;color:#111318;letter-spacing:-0.048px;-webkit-text-stroke:0.5px #111318;">Page</span>
<span class="t" style="left:971.06px;top:1712.71px;font-size:28.7px;color:#111318;letter-spacing:0.269px;-webkit-text-stroke:0.5px #111318;transform:scaleX(1.0214);transform-origin:0 0;">Date</span>
<span class="t" style="left:1122.81px;top:1712.71px;font-size:28.7px;color:#111318;letter-spacing:0.415px;-webkit-text-stroke:0.5px #111318;transform:scaleX(1.0464);transform-origin:0 0;">Description</span>
<span class="t" style="left:1446.10px;top:1692.21px;font-size:28.7px;color:#111318;letter-spacing:0.213px;-webkit-text-stroke:0.5px #111318;transform:scaleX(1.0209);transform-origin:0 0;">Withdrawal</span>
<span class="t" style="left:1446.10px;top:1731.91px;font-size:28.7px;color:#111318;letter-spacing:0.274px;-webkit-text-stroke:0.5px #111318;transform:scaleX(1.0213);transform-origin:0 0;">Amount</span>
<span class="t" style="left:1632.94px;top:1692.21px;font-size:28.7px;color:#111318;letter-spacing:0.304px;-webkit-text-stroke:0.5px #111318;transform:scaleX(1.0296);transform-origin:0 0;">Deposit</span>
<span class="t" style="left:1635.00px;top:1731.91px;font-size:28.7px;color:#111318;letter-spacing:0.274px;-webkit-text-stroke:0.5px #111318;transform:scaleX(1.0213);transform-origin:0 0;">Amount</span>
<div class="b" style="left:1652.8px;top:1654.2px;width:107.4px;height:107.4px;background:#3770ea;border-radius:54px;box-shadow:0 3px 12px rgba(0,0,0,0.16);"></div>
<svg style="left:1653px;top:1654px" width="107" height="107" viewBox="0 0 107 107"><defs><radialGradient id="cg" cx="0.52" cy="0.72" r="0.62" gradientTransform="translate(0 0.2) scale(1 0.75)"><stop offset="0" stop-color="#b9cbf6"/><stop offset="0.55" stop-color="#dbe5fb"/><stop offset="1" stop-color="#ffffff"/></radialGradient></defs><path d="M22.300 40.500Q21.800 37.400 25 36.900L74.500 30.600Q77.700 30.200 78.100 33.300L81.700 61.500Q82.100 64.600 79 65.200L62.500 69L56.300 79.300Q55 81.300 53.300 79.700L44.600 71.300L28.300 72.200Q25.200 72.400 24.800 69.300Z" fill="url(#cg)"/></svg>
<div class="b" style="left:0;top:1764px;width:1800px;height:36px;background:linear-gradient(to bottom,rgba(0,0,0,0),rgba(0,0,0,0.07));"></div>
</div>
</body></html>
